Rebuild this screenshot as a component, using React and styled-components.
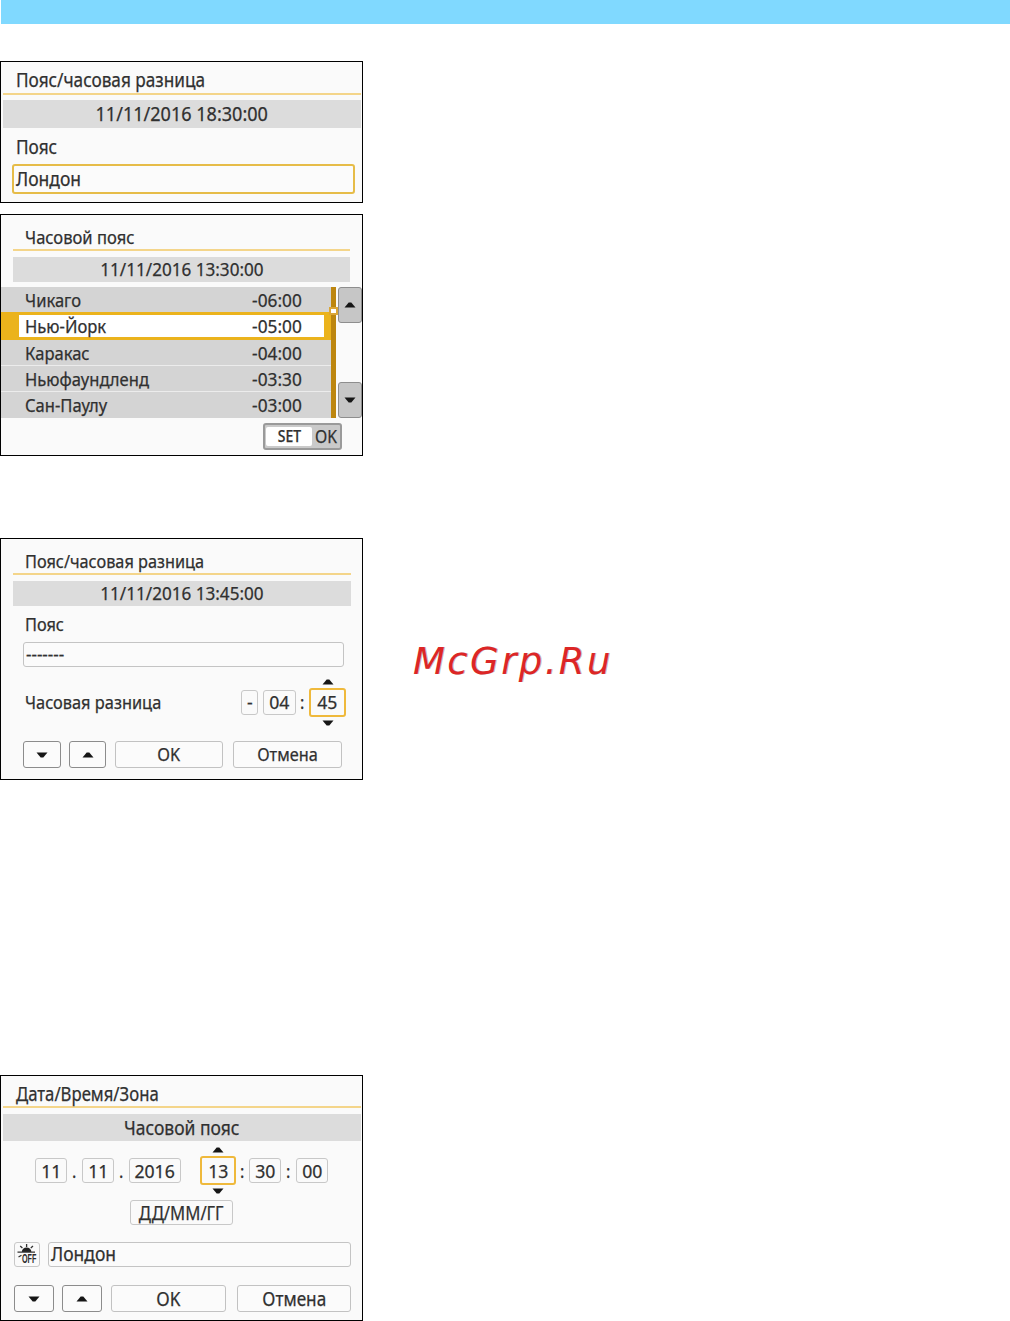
import React from 'react';
import styled, { createGlobalStyle } from 'styled-components';

const GlobalStyle = createGlobalStyle`
  body {
    margin: 0;
    background: #fff;
  }
`;

const Page = styled.main`
  display: flex;
  flex-direction: column;
  align-items: flex-start;
  width: 1010px;
  height: 1321px;
  overflow: hidden;
  font-family: 'Noto Sans', 'Open Sans', sans-serif;
  color: #303030;
`;

const TopBar = styled.header`
  align-self: stretch;
  height: 24px;
  margin: 0 0 37px 1px;
  background: #80d9ff;
`;

const Screen = styled.section`
  box-sizing: border-box;
  display: flex;
  flex-direction: column;
  flex: none;
  width: 363px;
  height: ${p => p.$height}px;
  margin-bottom: ${p => p.$gap || 0}px;
  border: 1px solid #000;
  background: #fafafa;
`;

// the camera font is narrower than Noto Sans, so every label is squeezed a bit
const Text = styled.span`
  display: inline-block;
  flex: none;
  margin-bottom: ${p => (p.$low ? 0 : 1)}px;
  font-size: ${p => p.$size || 18}px;
  font-weight: ${p => p.$weight || 400};
  line-height: 24px;
  white-space: pre;
  -webkit-text-stroke: 0.25px currentColor;
  transform: scaleX(${p => p.$squeeze || 0.905});
  transform-origin: ${p => p.$from || 'left'} center;
`;

const Title = styled.div`
  box-sizing: border-box;
  display: flex;
  align-items: center;
  height: ${p => p.$height}px;
  padding: ${p => p.$top}px 0 0 ${p => p.$left}px;
`;

const Rule = styled.div`
  flex: none;
  height: 2px;
  margin: 0 ${p => p.$right}px 0 ${p => p.$left}px;
  background: #f4d58a;
`;

const Banner = styled.div`
  display: flex;
  flex: none;
  align-items: center;
  justify-content: center;
  height: ${p => p.$height}px;
  margin: ${p => p.$top}px ${p => p.$right}px 0 ${p => p.$left}px;
  background: #dcdcdc;
`;

const Field = styled.div`
  box-sizing: border-box;
  display: flex;
  flex: none;
  align-items: center;
  width: ${p => p.$width}px;
  height: ${p => p.$height || 25}px;
  padding-left: 2px;
  border: ${p => (p.$active ? '2px solid #e6bc48' : '1px solid #c4c4c4')};
  border-radius: 3px;
  background: #fbfbfb;
`;

const Row = styled.div`
  display: flex;
  flex: none;
  align-items: center;
  height: ${p => p.$height}px;
  margin-top: ${p => p.$top || 0}px;
  padding-left: ${p => p.$left}px;
`;

const Box = styled.div`
  position: relative;
  box-sizing: border-box;
  display: flex;
  flex: none;
  align-items: center;
  justify-content: center;
  width: ${p => p.$width}px;
  height: ${p => (p.$active ? 29 : 25)}px;
  border: ${p => (p.$active ? '2px solid #efb93c' : '1px solid #c8c8c8')};
  border-radius: 3px;
`;

const Mark = styled.div`
  display: flex;
  flex: none;
  justify-content: center;
  width: ${p => p.$width}px;
`;

const RowLabel = styled.div`
  display: flex;
  flex: none;
  width: 216px;
`;

const ArrowAbove = styled.div`
  position: absolute;
  top: -11px;
  display: flex;
`;

const ArrowBelow = styled.div`
  position: absolute;
  bottom: -11px;
  display: flex;
`;

const Button = styled.div`
  box-sizing: border-box;
  display: flex;
  flex: none;
  align-items: center;
  justify-content: center;
  width: ${p => p.$width}px;
  height: 27px;
  margin-right: ${p => p.$gap || 0}px;
  border: 1px solid ${p => (p.$dark ? '#8c8c8c' : '#c2c2c2')};
  border-radius: 3px;
  background: #fbfbfb;
`;

const ListArea = styled.div`
  display: flex;
  flex: none;
  height: 131px;
  margin-top: 5px;
`;

const List = styled.div`
  display: flex;
  flex-direction: column;
  width: 330px;
  background: #ececec;
`;

const ListRow = styled.div`
  box-sizing: border-box;
  display: flex;
  align-items: center;
  justify-content: space-between;
  height: 25px;
  margin-bottom: 1px;
  padding: 1px 29px 0 24px;
  background: #d4d4d4;

  ${p => p.$selected && `
    height: 28px;
    margin: 0;
    padding: 1px 22px 0 6px;
    border: solid #ebb31c;
    border-width: 3px 7px 3px 18px;
    background: #fff;
  `}

  &:first-child {
    margin-bottom: 0;
  }

  &:last-child {
    height: 26px;
    margin-bottom: 0;
  }
`;

const Track = styled.div`
  position: relative;
  width: 5px;
  background: #bd860f;
`;

const Thumb = styled.div`
  position: absolute;
  top: 20px;
  left: -2px;
  box-sizing: border-box;
  width: 9px;
  height: 8px;
  border: 2px solid #dba637;
  background: #fff;
`;

const Pager = styled.div`
  display: flex;
  flex-direction: column;
  justify-content: space-between;
  margin-left: 2px;
`;

const PagerButton = styled.div`
  box-sizing: border-box;
  display: flex;
  align-items: center;
  justify-content: center;
  width: 24px;
  height: 36px;
  border: 1px solid #8e8e8e;
  border-radius: 3px;
  background: #c6c6c6;
`;

const SetButton = styled.div`
  box-sizing: border-box;
  display: flex;
  align-items: center;
  width: 79px;
  height: 27px;
  margin: 5px 0 0 262px;
  padding-left: 1px;
  border: 2px solid #9a9a9a;
  border-radius: 3px;
  background: #cacaca;
`;

const SetKey = styled.div`
  display: flex;
  align-items: center;
  justify-content: center;
  width: 47px;
  height: 19px;
  margin-right: 3px;
  border-radius: 2px;
  background: #fff;
`;

const WithWatermark = styled.div`
  display: flex;
  align-items: flex-start;
  height: 242px;
  margin-bottom: 295px;
`;

const Watermark = styled.div`
  margin: 103px 0 0 50px;
  font: italic 37px/42px 'DejaVu Sans', sans-serif;
  letter-spacing: 2.4px;
  color: #dc2626;
  text-shadow: 1px 0 0 #55555566;
`;

const DaylightIcon = styled.svg`
  flex: none;
  overflow: visible;
`;

const Arrow = ({ down }) => (
  <svg width="12" height="6" viewBox="0 0 12 6">
    <path d={down ? 'M0.5 0.5h11L7.3 5.5H4.7z' : 'M0.5 5.5h11L7.3 0.5H4.7z'} fill="#161616" />
  </svg>
);

const DaylightOff = () => (
  <DaylightIcon width="24" height="23" viewBox="0 0 24 23">
    <path d="M6.8 9a4.8 4.6 0 0 1 9.6 0z" fill="#222" />
    <path
      d="M11.6 1v3M5.2 3l2.2 2M18 3l-2.2 2M2.5 9.2h17.5M3.5 14l3-1.8"
      stroke="#333"
      strokeWidth="1.3"
      fill="none"
    />
    <text transform="translate(7 20) scale(0.6 1)" fontFamily="Liberation Sans, sans-serif" fontSize="12" fontWeight="700" fill="#2c2c2c">OFF</text>
  </DaylightIcon>
);

const Spinner = ({ width, low, children }) => (
  <Box $width={width} $active>
    <ArrowAbove><Arrow /></ArrowAbove>
    <Text $from="center" $squeeze={0.98} $low={low}>{children}</Text>
    <ArrowBelow><Arrow down /></ArrowBelow>
  </Box>
);

const Digits = ({ width, low, children }) => (
  <Box $width={width}>
    <Text $from="center" $squeeze={0.98} $low={low}>{children}</Text>
  </Box>
);

const zones = [
  { city: 'Чикаго', offset: '-06:00' },
  { city: 'Нью-Йорк', offset: '-05:00', selected: true },
  { city: 'Каракас', offset: '-04:00' },
  { city: 'Ньюфаундленд', offset: '-03:30' },
  { city: 'Сан-Паулу', offset: '-03:00' },
];

const ZoneSummary = () => (
  <Screen $height={142} $gap={11}>
    <Title $height={31} $top={6} $left={15}><Text $size={19}>Пояс/часовая разница</Text></Title>
    <Rule $left={2} $right={1} />
    <Banner $height={28} $top={5} $left={2} $right={1}>
      <Text $size={19} $squeeze={0.95} $from="center" $low>11/11/2016 18:30:00</Text>
    </Banner>
    <Row $height={34} $top={2} $left={15}><Text $size={19} $low>Пояс</Text></Row>
    <Row $height={30} $left={11}>
      <Field $width={343} $height={30} $active><Text $size={19} $squeeze={0.92}>Лондон</Text></Field>
    </Row>
  </Screen>
);

const ZoneList = () => (
  <Screen $height={242} $gap={82}>
    <Title $height={34} $top={11} $left={24}><Text $squeeze={0.92}>Часовой пояс</Text></Title>
    <Rule $left={12} $right={12} />
    <Banner $height={25} $top={6} $left={12} $right={12}>
      <Text $squeeze={0.95} $from="center">11/11/2016 13:30:00</Text>
    </Banner>
    <ListArea>
      <List>
        {zones.map(zone => (
          <ListRow key={zone.city} $selected={zone.selected}>
            <Text $squeeze={0.92}>{zone.city}</Text>
            <Text $from="right" $squeeze={0.96}>{zone.offset}</Text>
          </ListRow>
        ))}
      </List>
      <Track><Thumb /></Track>
      <Pager>
        <PagerButton><Arrow /></PagerButton>
        <PagerButton><Arrow down /></PagerButton>
      </Pager>
    </ListArea>
    <SetButton>
      <SetKey><Text $size={16} $weight={500} $squeeze={0.87} $from="center">SET</Text></SetKey>
      <Text $squeeze={0.87}>OK</Text>
    </SetButton>
  </Screen>
);

const ZoneOffset = () => (
  <Screen $height={242}>
    <Title $height={34} $top={11} $left={24}><Text>Пояс/часовая разница</Text></Title>
    <Rule $left={12} $right={11} />
    <Banner $height={25} $top={6} $left={12} $right={11}>
      <Text $squeeze={0.95} $from="center">11/11/2016 13:45:00</Text>
    </Banner>
    <Row $height={36} $left={24}><Text>Пояс</Text></Row>
    <Row $height={25} $left={22}>
      <Field $width={321}><Text $squeeze={0.94}>-------</Text></Field>
    </Row>
    <Row $height={29} $top={21} $left={24}>
      <RowLabel><Text $squeeze={0.91}>Часовая разница</Text></RowLabel>
      <Digits width={17}>-</Digits>
      <Mark $width={5} />
      <Digits width={33}>04</Digits>
      <Mark $width={13}><Text>:</Text></Mark>
      <Spinner width={37}>45</Spinner>
    </Row>
    <Row $height={27} $top={24} $left={22}>
      <Button $width={38} $gap={8} $dark><Arrow down /></Button>
      <Button $width={37} $gap={9} $dark><Arrow /></Button>
      <Button $width={108} $gap={10}><Text $from="center">OK</Text></Button>
      <Button $width={109}><Text $from="center">Отмена</Text></Button>
    </Row>
  </Screen>
);

const DateTimeZone = () => (
  <Screen $height={246}>
    <Title $height={30} $top={7} $left={15}><Text $size={19} $squeeze={0.88}>Дата/Время/Зона</Text></Title>
    <Rule $left={2} $right={1} />
    <Banner $height={27} $top={6} $left={2} $right={1}>
      <Text $size={19} $squeeze={0.92} $from="center" $low>Часовой пояс</Text>
    </Banner>
    <Row $height={29} $top={15} $left={34}>
      <Digits width={32} low>11</Digits>
      <Mark $width={15}><Text $low>.</Text></Mark>
      <Digits width={32} low>11</Digits>
      <Mark $width={15}><Text $low>.</Text></Mark>
      <Digits width={52} low>2016</Digits>
      <Mark $width={19} />
      <Spinner width={36} low>13</Spinner>
      <Mark $width={13}><Text $low>:</Text></Mark>
      <Digits width={32} low>30</Digits>
      <Mark $width={15}><Text $low>:</Text></Mark>
      <Digits width={32} low>00</Digits>
    </Row>
    <Row $height={25} $top={15} $left={129}>
      <Box $width={103}><Text $size={19} $squeeze={0.88} $from="center" $low>ДД/ММ/ГГ</Text></Box>
    </Row>
    <Row $height={25} $top={17} $left={13}>
      <Box $width={26}><DaylightOff /></Box>
      <Mark $width={8} />
      <Field $width={303}><Text $size={19} $squeeze={0.92}>Лондон</Text></Field>
    </Row>
    <Row $height={27} $top={18} $left={13}>
      <Button $width={40} $gap={8} $dark><Arrow down /></Button>
      <Button $width={40} $gap={9} $dark><Arrow /></Button>
      <Button $width={115} $gap={11}><Text $size={19} $from="center" $low>OK</Text></Button>
      <Button $width={114}><Text $size={19} $from="center" $low>Отмена</Text></Button>
    </Row>
  </Screen>
);

const App = () => (
  <>
    <GlobalStyle />
    <Page>
      <TopBar />
      <ZoneSummary />
      <ZoneList />
      <WithWatermark>
        <ZoneOffset />
        <Watermark>McGrp.Ru</Watermark>
      </WithWatermark>
      <DateTimeZone />
    </Page>
  </>
);

export default App;
